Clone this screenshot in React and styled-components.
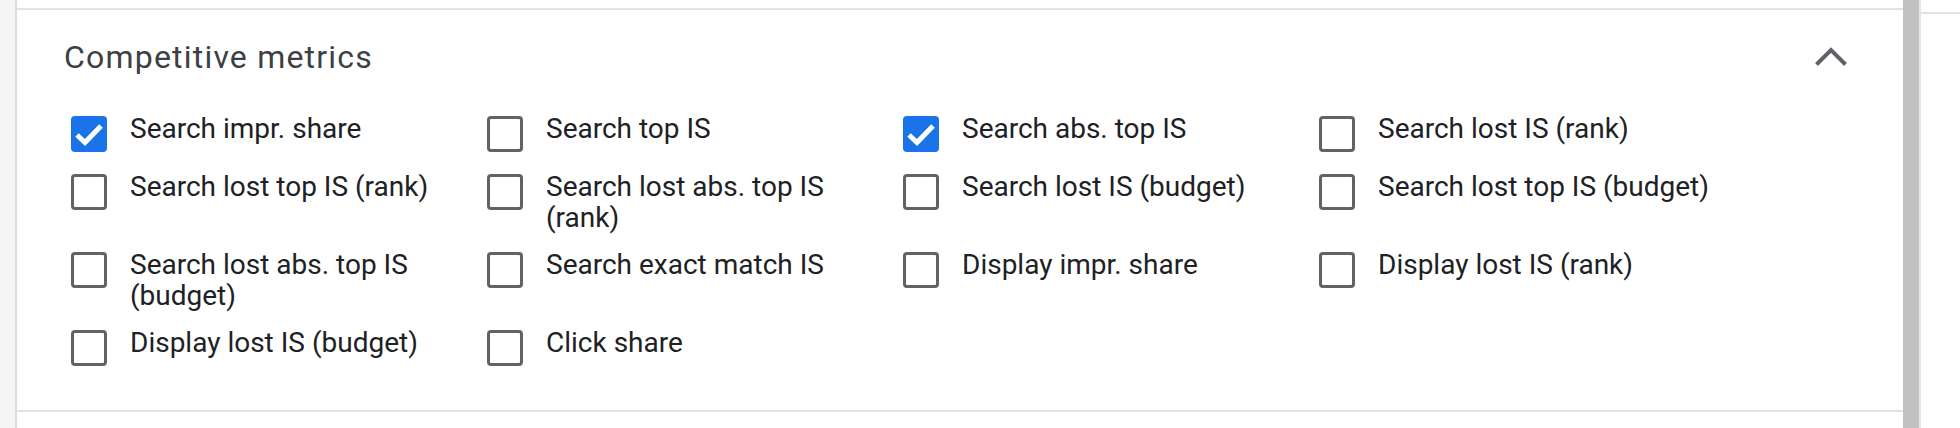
import React from "react";
import styled, { createGlobalStyle } from "styled-components";

const Global = createGlobalStyle`
  html, body { margin: 0; padding: 0; background: #ffffff; }
  body { font-family: Roboto, "Liberation Sans", Arial, sans-serif; -webkit-font-smoothing: antialiased; }
`;

const Page = styled.div`
  display: flex;
  height: 428px;
  width: 1960px;
  background: #ffffff;
  overflow: hidden;
`;

const Gutter = styled.div`
  width: 15px;
  flex: none;
  background: #f5f5f5;
  border-right: 2px solid #dcdcdc;
`;

const Main = styled.div`
  flex: 1;
  min-width: 0;
  padding-top: 8px;
`;

const Section = styled.section`
  border-top: 2px solid #e2e2e2;
  border-bottom: 2px solid #e2e2e2;
`;

const Header = styled.div`
  display: flex;
  align-items: center;
  justify-content: space-between;
  height: 40px;
  padding: 27px 56px 0 47px;
`;

const Title = styled.h2`
  margin: 0;
  font-family: Roboto, "Open Sans", sans-serif;
  font-weight: 400;
  font-size: 32px;
  line-height: 40px;
  letter-spacing: 1.2px;
  color: #3c4043;
`;

const ToggleButton = styled.button`
  display: flex;
  align-items: center;
  justify-content: center;
  width: 32px;
  height: 40px;
  padding: 0;
  border: none;
  background: transparent;
  cursor: pointer;
`;

const Grid = styled.div`
  display: grid;
  grid-template-columns: repeat(4, 416px);
  row-gap: 16px;
  padding: 36px 0 41px 54px;
`;

const Item = styled.label`
  display: flex;
  align-items: flex-start;
  gap: 23px;
  padding-right: 24px;
  cursor: pointer;
`;

const Box = styled.span`
  flex: none;
  box-sizing: border-box;
  width: 36px;
  height: 36px;
  margin: 3px 0;
  border-radius: 4px;
  display: flex;
  align-items: center;
  justify-content: center;
  background: ${(p) => (p.$checked ? "#1a73e8" : "#ffffff")};
  border: ${(p) => (p.$checked ? "none" : "3.5px solid #5f6368")};
`;

const Label = styled.span`
  font-family: Roboto, "Liberation Sans", sans-serif;
  font-size: 28px;
  line-height: 31px;
  color: #202124;
`;

const Scrollbar = styled.div`
  width: 16px;
  flex: none;
  background: #c1c1c1;
  border-right: 2px solid #e6e6e6;
`;

const SidePane = styled.div`
  width: 39px;
  flex: none;
  padding-top: 12px;
`;

const SideRule = styled.div`
  border-top: 2px solid #e2e2e2;
`;

const items = [
  ["Search impr. share", true],
  ["Search top IS", false],
  ["Search abs. top IS", true],
  ["Search lost IS (rank)", false],
  ["Search lost top IS (rank)", false],
  ["Search lost abs. top IS (rank)", false],
  ["Search lost IS (budget)", false],
  ["Search lost top IS (budget)", false],
  ["Search lost abs. top IS (budget)", false],
  ["Search exact match IS", false],
  ["Display impr. share", false],
  ["Display lost IS (rank)", false],
  ["Display lost IS (budget)", false],
  ["Click share", false],
];

function Check() {
  return (
    <svg width="36" height="36" viewBox="0 0 36 36">
      <polyline points="6,19 14,26.5 30,10" fill="none" stroke="#ffffff" strokeWidth="5" />
    </svg>
  );
}

function Chevron() {
  return (
    <svg width="32" height="20" viewBox="0 0 32 20">
      <polyline points="1.5,17.5 16,3 30.5,17.5" fill="none" stroke="#5f6368" strokeWidth="4" />
    </svg>
  );
}

export default function App() {
  return (
    <>
      <Global />
      <Page>
        <Gutter />
        <Main>
          <Section>
            <Header>
              <Title>Competitive metrics</Title>
              <ToggleButton aria-label="Collapse">
                <Chevron />
              </ToggleButton>
            </Header>
            <Grid>
              {items.map(([text, checked]) => (
                <Item key={text}>
                  <Box $checked={checked}>{checked && <Check />}</Box>
                  <Label>{text}</Label>
                </Item>
              ))}
            </Grid>
          </Section>
        </Main>
        <Scrollbar />
        <SidePane>
          <SideRule />
        </SidePane>
      </Page>
    </>
  );
}
